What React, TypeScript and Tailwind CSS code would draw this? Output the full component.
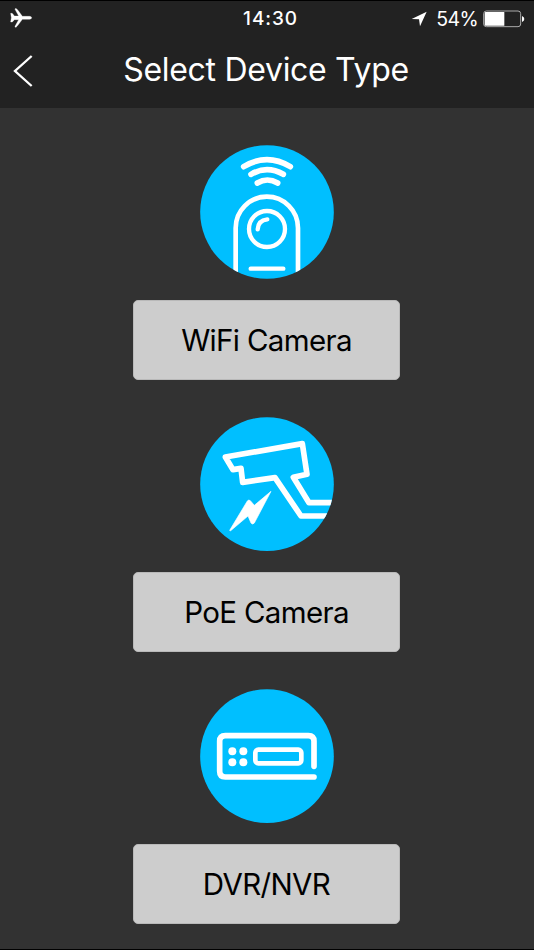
import type { ReactNode } from "react";

function StatusBar() {
  return (
    <div className="grid h-[34px] grid-cols-3 items-center text-white">
      <svg className="ml-[10px] h-5 w-[23px]" viewBox="30 23 69 60" fill="#fff" stroke="#fff" strokeWidth="1">
        <path d="M32 39h4q2 0 7 8h13L45 27q-1-3 4-2 3 1 18 23h22q6 1 6 4.500t-6 4.500H67Q51 79 49 80q-5 2-4-2l11-20H43q-5 7-7 7h-4l2-13z" />
      </svg>
      <div className="pt-px pl-[7px] text-center text-[19px] leading-6 font-medium tracking-[0.9px]">14:30</div>
      <div className="flex items-center justify-end pt-px pr-[9px]">
        <svg className="mr-[9px] h-4 w-4" viewBox="35 31 48 48" fill="#fff">
          <path d="M82 33 37 55l22 1 3 21z" />
        </svg>
        <span className="text-[19.5px] leading-6 tracking-[-0.6px]">54%</span>
        <svg className="ml-[5px] h-[18px] w-[42px]" viewBox="249 27 126 54" fill="none">
          <rect x="251" y="30" width="111" height="47" rx="8" stroke="#aaa" strokeWidth="3" />
          <path d="M254 36q0-3 3-3h56v41h-56q-3 0-3-3z" fill="#fff" />
          <path d="M366 45q7 3 7 9t-7 9z" fill="#fff" />
        </svg>
      </div>
    </div>
  );
}

function WifiCameraIcon() {
  return (
    <svg className="h-[134px] w-[134px]" viewBox="30 15 402 402" fill="none" stroke="#fff" strokeLinecap="round">
      <defs>
        <clipPath id="wifi-disc"><circle cx="231" cy="216" r="200.5" /></clipPath>
      </defs>
      <circle cx="231" cy="216" r="200.5" fill="#00bfff" stroke="none" />
      <g clipPath="url(#wifi-disc)">
        <path d="M161 80q70-42 140 0M183 103q48-28 97 0M202 129q30-18 61 0" strokeWidth="17" />
        <path d="M137 420V264a93.500 94 0 0 1 187 0v156" strokeWidth="14" />
        <circle cx="231" cy="267" r="54" strokeWidth="13" />
        <path d="M203 268q1-27 29-30" strokeWidth="13" />
        <path d="M182 386h98" strokeWidth="13" />
      </g>
    </svg>
  );
}

function PoeCameraIcon() {
  return (
    <svg className="h-[134px] w-[134px]" viewBox="30 21 402 402" fill="none" stroke="#fff" strokeLinejoin="round">
      <defs>
        <clipPath id="poe-disc"><circle cx="231" cy="222.500" r="200.5" /></clipPath>
      </defs>
      <circle cx="231" cy="222.500" r="200.5" fill="#00bfff" stroke="none" />
      <g clipPath="url(#poe-disc)">
        <path d="M440 278h-83l-47-76 41-9-14-92-231 40 23 38 24-4 5 42 97-14 78 115h107" strokeWidth="17" />
        <path d="m243 244-50 42-12-14q-5-4-9 1l-53 88 2 2 53-45 9 21q5 6 10 0z" fill="#fff" strokeWidth="2" />
      </g>
    </svg>
  );
}

function RecorderIcon() {
  return (
    <svg className="h-[134px] w-[134px]" viewBox="30 27 402 402" fill="none" stroke="#fff" strokeLinecap="round">
      <circle cx="231" cy="228.500" r="200.5" fill="#00bfff" stroke="none" />
      <path d="M372 259v-75q0-17-17-17H106q-17 0-17 17v90q0 17 17 17h266" strokeWidth="17" />
      <rect x="196" y="209" width="138" height="41" rx="9" strokeWidth="14" />
      <g fill="#fff" stroke="none">
        <circle cx="127" cy="214" r="12" />
        <circle cx="160" cy="214" r="12" />
        <circle cx="127" cy="247" r="12" />
        <circle cx="160" cy="247" r="12" />
      </g>
    </svg>
  );
}

function DeviceOption({ icon, children }: { icon: ReactNode; children: ReactNode }) {
  return (
    <div className="flex h-[272px] flex-col items-center">
      {icon}
      <button className="mt-[21px] h-20 w-[267px] rounded-[5px] border border-[#b9b9b9] bg-[#cdcdcd] text-[29.5px] leading-9 tracking-[-0.65px] text-black">
        {children}
      </button>
    </div>
  );
}

export default function App() {
  return (
    <main className="flex h-[950px] w-[534px] flex-col overflow-hidden border-y border-black bg-[#323232] font-['Inter',sans-serif]">
      <header className="h-[107px] shrink-0 bg-[#222222] text-white">
        <StatusBar />
        <div className="grid grid-cols-[60px_1fr_60px] items-center pt-[14px]">
          <svg className="mt-[2px] ml-3 h-8 w-6" viewBox="35 165 72 96" fill="none" stroke="#fff" strokeWidth="7">
            <path d="M94 168 44 213l50 45" />
          </svg>
          <h1 className="pr-[2px] text-center text-[32px] leading-[42px] font-normal tracking-[-0.3px] whitespace-nowrap">Select Device Type</h1>
        </div>
      </header>
      <section className="w-[533px] pt-[37px]">
        <DeviceOption icon={<WifiCameraIcon />}>WiFi Camera</DeviceOption>
        <DeviceOption icon={<PoeCameraIcon />}>PoE Camera</DeviceOption>
        <DeviceOption icon={<RecorderIcon />}>DVR/NVR</DeviceOption>
      </section>
    </main>
  );
}
